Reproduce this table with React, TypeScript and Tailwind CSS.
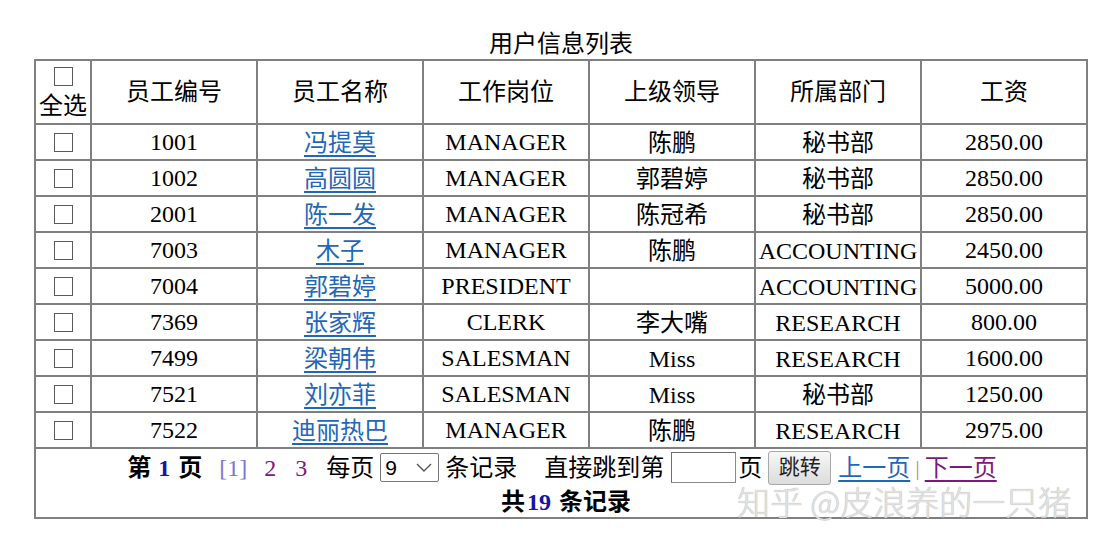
import { ReactNode } from 'react';

type Emp = {
  no: string;
  name: string;
  job: string;
  mgr: string;
  dept: string;
  sal: string;
};

const rows: Emp[] = [
  { no: '1001', name: '冯提莫', job: 'MANAGER', mgr: '陈鹏', dept: '秘书部', sal: '2850.00' },
  { no: '1002', name: '高圆圆', job: 'MANAGER', mgr: '郭碧婷', dept: '秘书部', sal: '2850.00' },
  { no: '2001', name: '陈一发', job: 'MANAGER', mgr: '陈冠希', dept: '秘书部', sal: '2850.00' },
  { no: '7003', name: '木子', job: 'MANAGER', mgr: '陈鹏', dept: 'ACCOUNTING', sal: '2450.00' },
  { no: '7004', name: '郭碧婷', job: 'PRESIDENT', mgr: '', dept: 'ACCOUNTING', sal: '5000.00' },
  { no: '7369', name: '张家辉', job: 'CLERK', mgr: '李大嘴', dept: 'RESEARCH', sal: '800.00' },
  { no: '7499', name: '梁朝伟', job: 'SALESMAN', mgr: 'Miss', dept: 'RESEARCH', sal: '1600.00' },
  { no: '7521', name: '刘亦菲', job: 'SALESMAN', mgr: 'Miss', dept: '秘书部', sal: '1250.00' },
  { no: '7522', name: '迪丽热巴', job: 'MANAGER', mgr: '陈鹏', dept: 'RESEARCH', sal: '2975.00' },
];

const headers = ['员工编号', '员工名称', '工作岗位', '上级领导', '所属部门', '工资'];

function Box() {
  return <span className="block w-[19px] h-[19px] border-[1.5px] border-[#5a5a5a] bg-white" />;
}

function Cell({ children, className = '' }: { children?: ReactNode; className?: string }) {
  return (
    <div className={`bg-white flex items-center justify-center leading-none ${className}`}>
      {children}
    </div>
  );
}

export default function App() {
  return (
    <div className="relative w-[1115px] h-[548px] bg-white text-black text-[24px] font-['Liberation_Serif','Noto_Sans_CJK_SC',serif]">
      <div className="ml-[34px] w-[1054px] pt-[29px]">
        <div className="h-[30px] flex items-center justify-center text-[24px] leading-none">用户信息列表</div>

        <div className="grid grid-cols-[54px_repeat(6,164px)] grid-rows-[62px_repeat(9,34px)_68px] gap-[2px] p-[2px] bg-[#808080]">
          {/* header */}
          <Cell className="flex-col gap-[8px] pt-[1px]">
            <Box />
            <span>全选</span>
          </Cell>
          {headers.map((h) => (
            <Cell key={h}>{h}</Cell>
          ))}

          {rows.map((r) => (
            <div key={r.no} className="contents">
              <Cell><Box /></Cell>
              <Cell>{r.no}</Cell>
              <Cell>
                <a href="#" className="text-[#1f67b8] underline underline-offset-[4px] decoration-[1.5px] pt-[2px]">{r.name}</a>
              </Cell>
              <Cell>{r.job}</Cell>
              <Cell className="pt-[2px]">{r.mgr}</Cell>
              <Cell className="pt-[2px]">{r.dept}</Cell>
              <Cell>{r.sal}</Cell>
            </div>
          ))}

          {/* pager */}
          <div className="col-span-7 bg-white flex flex-col items-center leading-none">
            <div className="h-[37px] flex items-center pl-[2px]">
              <span className="font-bold">第</span>
              <span className="font-bold text-[#1414a8] ml-[7px]">1</span>
              <span className="font-bold ml-[8px]">页</span>
              <span className="text-[#7878d4] ml-[17px]">[1]</span>
              <span className="text-[#7a1a7e] ml-[17px]">2</span>
              <span className="text-[#7a1a7e] ml-[19px]">3</span>
              <span className="ml-[19px]">每页</span>
              <div className="ml-[6px] w-[59px] h-[29px] border-[1.5px] border-[#767676] rounded-[2px] flex items-center justify-between px-[4px] font-['Liberation_Sans',sans-serif] text-[21px]">
                <span>9</span>
                <svg width="20" height="12" viewBox="0 0 20 12" fill="none" stroke="#555" strokeWidth="1.4">
                  <path d="M3 2l7 7 7-7" />
                </svg>
              </div>
              <span className="ml-[6px]">条记录</span>
              <span className="ml-[27px]">直接跳到第</span>
              <div className="ml-[7px] w-[65px] h-[31px] border-[1.5px] border-[#8a8a8a] border-t-[#6e6e6e] border-l-[#6e6e6e] bg-white" />
              <span className="ml-[2px]">页</span>
              <button className="ml-[6px] w-[63px] h-[34px] border border-[#a8a8a8] rounded-[3px] bg-gradient-to-b from-[#f7f7f7] to-[#dcdcdc] text-[21px] text-[#222] flex items-center justify-center">跳转</button>
              <a href="#" className="ml-[7px] text-[#1f67b8] underline underline-offset-[4px] decoration-[1.5px]">上一页</a>
              <span className="ml-[5px] text-[#999] text-[22px]">|</span>
              <a href="#" className="ml-[5px] text-[#7a1a7e] underline underline-offset-[4px] decoration-[1.5px]">下一页</a>
            </div>
            <div className="h-[31px] flex items-center font-bold pl-[10px]">
              <span>共</span>
              <span className="text-[#1414a8] ml-[2px]">19</span>
              <span className="ml-[8px]">条记录</span>
            </div>
          </div>
        </div>
      </div>

      {/* watermark */}
      <div className="absolute left-[737px] top-[485px] text-[33px] font-light leading-none whitespace-nowrap text-[#e2e2e2] font-['Noto_Sans_CJK_SC',sans-serif] [text-shadow:0_0_1px_#a0a0a0]">
        知乎 @皮浪养的一只猪
      </div>
    </div>
  );
}
